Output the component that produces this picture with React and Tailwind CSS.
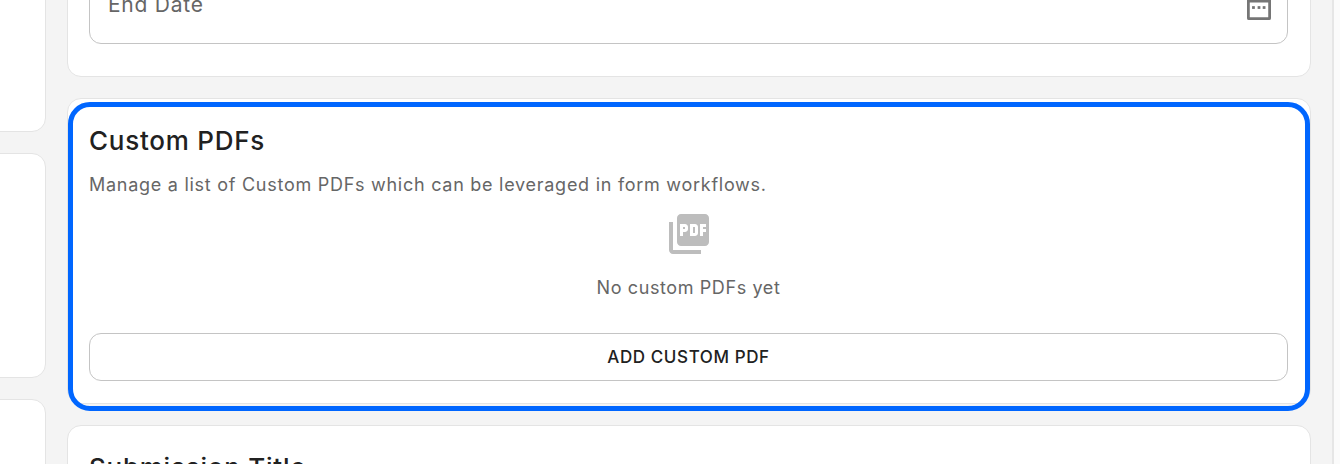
import { MdPictureAsPdf } from "react-icons/md";

const cardClass = "rounded-[14px] border border-[#e4e4e4] bg-white";
const titleClass = "text-[26px] font-medium leading-[36px] tracking-[0.75px] text-[#212121]";
const bodyClass = "text-[18px] leading-[24px] text-[#666666]";

function CalendarIcon() {
  return (
    <svg width="24" height="24" viewBox="0 0 26 26" className="mb-px shrink-0" fill="#757575">
      <path d="M1 0h24a1 1 0 0 1 1 1v23a2 2 0 0 1-2 2H2a2 2 0 0 1-2-2V1a1 1 0 0 1 1-1zm2 7v16h20V7z" />
      <rect x="5.5" y="11" width="3" height="3" />
      <rect x="11.5" y="11" width="3" height="3" />
      <rect x="17" y="11" width="3" height="3" />
    </svg>
  );
}

function SideColumn() {
  return (
    <div className="flex w-[46px] shrink-0 flex-col gap-[21px]">
      <div className={`${cardClass} -ml-4 h-[180px]`} />
      <div className={`${cardClass} -ml-4 h-[225px]`} />
      <div className={`${cardClass} -ml-4 h-[200px]`} />
    </div>
  );
}

function MainColumn() {
  return (
    <div className="ml-[21px] flex w-[1244px] shrink-0 flex-col gap-[21px]">
      <div className={`${cardClass} h-[125px] pl-[21px] pr-[22px] pt-[20px]`}>
        <div className="flex h-[71px] items-center justify-between rounded-[12px] border border-[#c4c4c4] pl-[18px] pr-[16px]">
          <span className="pb-[7px] text-[21px] tracking-[0.75px] text-[#666666]">End Date</span>
          <CalendarIcon />
        </div>
      </div>

      <div className={`${cardClass} relative pb-[22px] pl-[21px] pr-[22px] pt-[24px]`}>
        <h2 className={titleClass}>Custom PDFs</h2>
        <p className={`${bodyClass} mt-[14px] tracking-[0.73px]`}>
          Manage a list of Custom PDFs which can be leveraged in form workflows.
        </p>
        <div className="mt-[13px] flex flex-col items-center">
          <MdPictureAsPdf size={48} color="#bdbdbd" />
          <p className={`${bodyClass} mt-[18px] tracking-[0.6px]`}>No custom PDFs yet</p>
        </div>
        <button className="mt-[33px] flex h-[48px] w-full items-center justify-center rounded-[12px] border border-[#c4c4c4] pt-[2px] text-[17px] font-medium tracking-[0.6px] text-[#212121]">
          ADD CUSTOM PDF
        </button>
        <div className="pointer-events-none absolute -bottom-[8px] left-0 right-0 top-[3px] rounded-[22px] border-[5px] border-[#0066ff]" />
      </div>

      <div className={`${cardClass} h-[200px] pl-[21px] pr-[22px] pt-[24px]`}>
        <h2 className={titleClass}>Submission Title</h2>
      </div>
    </div>
  );
}

export default function App() {
  return (
    <div className="flex h-[464px] w-[1340px] overflow-hidden bg-[#f4f4f4] font-[Inter,sans-serif]">
      <div className="flex -mt-[48px] w-[1332px] shrink-0 items-start">
        <SideColumn />
        <MainColumn />
      </div>
      <div className="h-full flex-1 border-l-2 border-[#e6e6e6] bg-[#fbfbfb]" />
    </div>
  );
}
